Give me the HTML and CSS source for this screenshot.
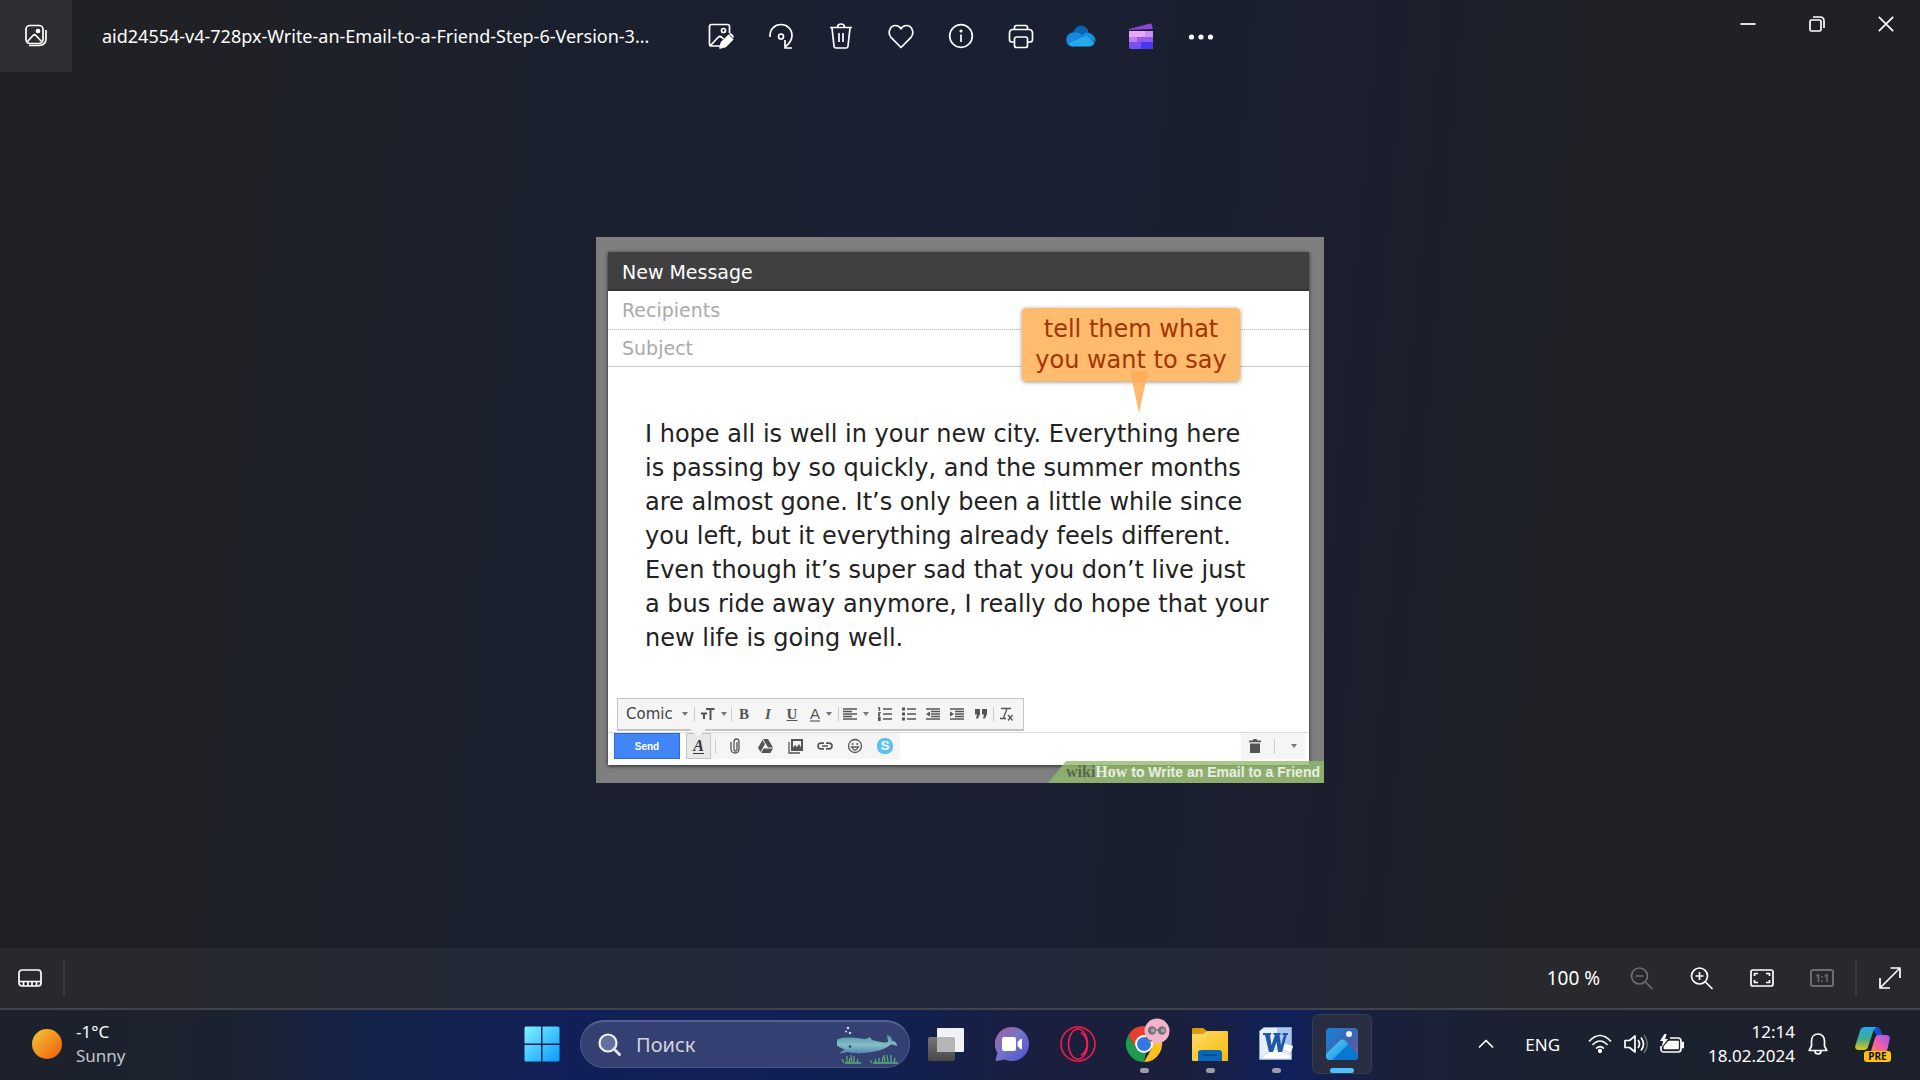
FILE: index.html
```html
<!DOCTYPE html>
<html lang="en">
<head>
<meta charset="utf-8">
<meta name="viewport" content="width=device-width, initial-scale=1">
<title>Photos</title>
<link rel="stylesheet" href="styles.css">
</head>
<body>
<header class="titlebar">
  <div class="title-left">
    <button class="gallery-btn" aria-label="Gallery"><svg class="icon" width="24" height="24" viewBox="0 0 24 24"><rect x="2" y="1.500" width="17" height="18" rx="4"/><path d="M5 21.500h10q7 0 7-7V6M3.500 17.500l5.500-6q1.500-1.500 3 0l5.500 6"/><circle class="fill" cx="14" cy="7" r="1.500"/></svg></button>
    <h1 class="filename">aid24554-v4-728px-Write-an-Email-to-a-Friend-Step-6-Version-3...</h1>
  </div>
  <nav class="tools" aria-label="Image tools">
    <button aria-label="Edit image"><svg class="icon" width="26" height="26" viewBox="0 0 26 26"><path d="M12 23H3.500q-2 0-2-2V3.500q0-2 2-2h16q2 0 2 2V10M3 22l7-7.500q2-2 4 0l1.500 1.500"/><circle cx="15.500" cy="7.500" r="2"/><path class="fill" d="M12 25l1.500-5.500 7-7 4 4-7 7zM21.500 11.500q1-1 2.500.5 1.500 1.500.5 2.500"/></svg></button>
    <button aria-label="Rotate"><svg class="icon" width="26" height="26" viewBox="0 0 26 26"><path d="M2 14V12.500C2 6 7 1.500 13 1.500S24 6 24 12.500c0 5-3 8.500-7 11.500M17 17v8h7"/><circle cx="13" cy="13.500" r="2.500"/></svg></button>
    <button aria-label="Delete"><svg class="icon" width="26" height="26" viewBox="0 0 26 26"><path d="M2 4.500h22M9.500 4c0-4 7-4 7 0M4 5l2 18q.2 2 2 2h10q1.800 0 2-2l2-18M11 10v9M15 10v9"/></svg></button>
    <button aria-label="Favorite"><svg class="icon" width="26" height="26" viewBox="0 0 26 26"><path d="M13 24.500L3 14.300C-.5 10.500 1.500 2.500 7.500 2.500c3 0 4.500 1.500 5.500 3.300 1-1.800 2.500-3.300 5.500-3.300 6 0 8 8 4.500 11.800z"/></svg></button>
    <button aria-label="Information"><svg class="icon" width="26" height="26" viewBox="0 0 26 26"><circle cx="13" cy="13" r="11.300"/><path d="M13 11.500v7.500"/><circle class="fill" cx="13" cy="8" r=".7"/></svg></button>
    <button aria-label="Print"><svg class="icon" width="26" height="26" viewBox="0 0 26 26"><path d="M6.500 19H4q-2.500 0-2.500-2.500v-6Q1.500 6.500 5 6.500h16q3.500 0 3.500 4v6Q24.500 19 22 19h-2.500M6.500 6V4.500q0-2 2-2h9q2 0 2 2V6"/><rect x="6.500" y="14" width="13" height="10.500" rx="2"/></svg></button>
    <button aria-label="OneDrive"><svg width="30" height="24" viewBox="0 0 30 24"><path fill="#0a64b5" d="M7 10C9-1 21 0 22.500 8L15 14z"/><path fill="#1688dc" d="M7 8.500C15 7 17 13 20 14L7 22.500C-2 22-2 9.500 7 8.500z"/><path fill="#1490df" d="M16 11.500q3-4 8-2.500 6 3 5.500 9z"/><path fill="#28a8ea" d="M2 19.500L20 11.500l8.500 7q-1.500 4-5.500 4H7q-3.500-.2-5-3z"/></svg></button>
    <button aria-label="Clipchamp"><svg width="24" height="26" viewBox="0 0 24 26"><path fill="#8b45d8" d="M0 6L21 .5q1.500-.2 2 1.500l.8 4L0 7z"/><path fill="#c990f4" d="M0 8h24v6H0z"/><path fill="#e8a8f8" d="M0 8h16v6H0z"/><path fill="#c47cf2" d="M0 14h24v5H0z"/><path fill="#9258f4" d="M8 14h16v5H8z"/><path fill="#7651f2" d="M0 19h24v7H2q-2 0-2-2z"/><path fill="#4b35ef" d="M12 19h12v5q0 2-2 2H12z"/></svg></button>
    <button aria-label="More"><svg class="dots" width="26" height="26" viewBox="0 0 26 26"><circle cx="3.500" cy="14" r="2.600"/><circle cx="13" cy="14" r="2.600"/><circle cx="22.500" cy="14" r="2.600"/></svg></button>
  </nav>
  <div class="window-controls">
    <button aria-label="Minimize"><svg class="icon" width="16" height="16" viewBox="0 0 16 16"><path d="M.5 8h15"/></svg></button>
    <button aria-label="Restore"><svg class="icon" width="16" height="16" viewBox="0 0 16 16"><rect x="1" y="4" width="11" height="11" rx="1.500"/><path d="M4 1h7q4 0 4 4v7"/></svg></button>
    <button aria-label="Close"><svg class="icon" width="16" height="16" viewBox="0 0 16 16"><path d="M.8.8l14.400 14.400M15.200.8L.8 15.200"/></svg></button>
  </div>
</header>

<main class="stage">
  <figure class="photo">
    <form class="compose">
      <h2 class="compose-title">New Message</h2>
      <input class="field" type="text" aria-label="Recipients" placeholder="Recipients">
      <input class="field field-subject" type="text" aria-label="Subject" placeholder="Subject">
      <textarea class="message" rows="7" aria-label="Message" spellcheck="false">I hope all is well in your new city. Everything here
is passing by so quickly, and the summer months
are almost gone. It’s only been a little while since
you left, but it everything already feels different.
Even though it’s super sad that you don’t live just
a bus ride away anymore, I really do hope that your
new life is going well.</textarea>
      <div class="format-bar">
        <span class="font-pick"><select class="font-select" aria-label="Font"><option>Comic</option></select><i class="caret"></i></span>
        <i class="sep"></i>
        <button type="button" class="wide size" aria-label="Size"><svg class="glyph" width="14" height="14" viewBox="0 0 14 14"><path d="M5 2h8.500M9.500 2v11M0 6.500h6M3 6.500V12" stroke-width="2"/></svg><i class="caret"></i></button>
        <i class="sep"></i>
        <button type="button" class="bold">B</button>
        <button type="button" class="italic">I</button>
        <button type="button" class="underline">U</button>
        <button type="button" class="wide" aria-label="Text color"><span class="color-letter">A</span><i class="caret"></i></button>
        <i class="sep"></i>
        <button type="button" class="wide" aria-label="Align"><svg class="glyph" width="14" height="12" viewBox="0 0 14 12"><path d="M0 1h14M0 3.500h9M0 6h14M0 8.500h9M0 11h14"/></svg><i class="caret"></i></button>
        <button type="button" aria-label="Numbered list"><svg class="glyph" width="14" height="14" viewBox="0 0 14 14"><path d="M5 2h9M5 7h9M5 12h9M0 1h1.500v3M0 6h2L0 8.500h2M0 10.500h2v3H0M0 12h2"/></svg></button>
        <button type="button" aria-label="Bulleted list"><svg class="glyph" width="14" height="14" viewBox="0 0 14 14"><path d="M5 2h9M5 7h9M5 12h9"/><path d="M0 2h3M0 7h3M0 12h3" stroke-width="3"/></svg></button>
        <button type="button" aria-label="Indent less"><svg class="glyph" width="14" height="12" viewBox="0 0 14 12"><path d="M0 1h14M5 3.500h9M5 6h9M5 8.500h9M0 11h14"/><path class="solid" d="M0 6l4-2.500v5z"/></svg></button>
        <button type="button" aria-label="Indent more"><svg class="glyph" width="14" height="12" viewBox="0 0 14 12"><path d="M0 1h14M5 3.500h9M5 6h9M5 8.500h9M0 11h14"/><path class="solid" d="M4 6L0 3.500v5z"/></svg></button>
        <button type="button" aria-label="Quote"><svg class="glyph" width="14" height="10" viewBox="0 0 14 10"><path class="solid" d="M1 0h5v5L4 9.500H2L3 5.500H1zM8 0h5v5l-2 4.500H9l1-4H8z"/></svg></button>
        <i class="sep"></i>
        <button type="button" aria-label="Remove formatting"><svg class="glyph" width="14" height="14" viewBox="0 0 14 14"><path d="M2 1.500h10M8 1.500L4.500 11M1 11.500h6M9 8l4.500 5.500M13.500 8L9 13.500"/></svg></button>
      </div>
      <div class="actions">
        <button type="button" class="send">Send</button>
        <button type="button" class="format-toggle" aria-label="Formatting options"><span>A</span></button>
        <div class="attach">
          <i class="sep"></i>
          <button type="button" aria-label="Attach file"><svg class="glyph" width="10" height="16" viewBox="0 0 10 16"><path d="M7 4v7.500q-.3 1.500-1.500 1.500T4 11.500V3.500Q4.200 1 6.500 1T9 3.500v8Q8.500 15 5.300 15 1.500 15 1 11.500V4"/></svg></button>
          <button type="button" aria-label="Insert from Drive"><svg class="glyph" width="15" height="14" viewBox="0 0 15 14"><path class="solid" d="M5 0h5l5 8.500h-5zM4.500 1l2.500 4-4.500 8L0 8.800zM5.500 9.500H15L12.500 14H3.200z"/></svg></button>
          <button type="button" aria-label="Insert photo"><svg class="glyph" width="15" height="15" viewBox="0 0 15 15"><path d="M1 3v11h11"/><path d="M4 1h10v10H4z" stroke-width="2"/><path class="solid" d="M4 10l3-4 2 2 2-3 3 5z"/></svg></button>
          <button type="button" aria-label="Insert link"><svg class="glyph" width="16" height="8" viewBox="0 0 16 8"><path d="M7 1.200H4Q1 1.200 1 4t3 2.800h3M9 1.200h3q3 0 3 2.800t-3 2.800H9M5 4h6" stroke-width="1.700"/></svg></button>
          <button type="button" aria-label="Insert emoji"><svg class="glyph" width="16" height="16" viewBox="0 0 16 16"><circle cx="8" cy="8" r="6.500"/><path d="M4.500 9q3.500 6 7 0z"/><circle class="solid" cx="5.700" cy="6" r="1"/><circle class="solid" cx="10.300" cy="6" r="1"/></svg></button>
          <button type="button" class="skype" aria-label="Skype"><span>S</span></button>
        </div>
        <div class="discard">
          <button type="button" aria-label="Discard"><svg class="glyph" width="12" height="14" viewBox="0 0 12 14"><path class="solid" d="M0 1.500h3.500l1-1.500h3l1 1.500H12v1.800H0zM1 4.500h10V14H1z"/></svg></button>
          <i class="sep"></i>
          <button type="button" aria-label="More options"><i class="caret"></i></button>
        </div>
      </div>
    </form>
    <p class="callout">tell them what<br>you want to say<svg class="pointer" width="18" height="42" viewBox="0 0 18 42"><path fill="#ffad55" fill-opacity=".85" d="M0 0h18L9 42z"/></svg></p>
    <figcaption class="watermark"><b class="wiki">wiki</b><b class="how">How</b> to Write an Email to a Friend</figcaption>
  </figure>
</main>

<section class="statusbar" aria-label="View controls">
  <button aria-label="Filmstrip"><svg class="icon" width="24" height="18" viewBox="0 0 24 18"><rect x="1" y="1" width="22" height="16" rx="3"/><path d="M1 12.500h22M5.500 13v4M10 13v4M14 13v4M18.500 13v4"/></svg></button>
  <i class="bar-sep"></i>
  <output class="zoom-level">100 %</output>
  <button class="dim" aria-label="Zoom out" disabled><svg class="icon" width="24" height="24" viewBox="0 0 24 24"><circle cx="9.500" cy="10" r="8"/><path d="M5.500 10h8M15.500 16l7 7"/></svg></button>
  <button aria-label="Zoom in"><svg class="icon" width="24" height="24" viewBox="0 0 24 24"><circle cx="9.500" cy="10" r="8"/><path d="M5.500 10h8M9.500 6v8M15.500 16l7 7"/></svg></button>
  <button aria-label="Fit to window"><svg class="icon" width="24" height="18" viewBox="0 0 24 18"><rect x="1" y="1" width="22" height="16" rx="2"/><path d="M4.500 7V4.500H8M16 4.500h3.500V7M19.500 11v2.500H16M8 13.500H4.500V11"/></svg></button>
  <button class="dim" aria-label="Actual size" disabled><span class="ratio">1:1</span></button>
  <i class="bar-sep"></i>
  <button class="expand" aria-label="Full screen"><svg class="icon" width="24" height="24" viewBox="0 0 24 24"><path d="M2 22L22 2M12.500 2H22v10M2 12v10h10"/></svg></button>
</section>

<footer class="taskbar">
  <div class="weather">
    <svg width="30" height="30" viewBox="0 0 30 30"><defs><linearGradient id="sun" x1="0" y1="0" x2="1" y2="1"><stop offset=".1" stop-color="#f3bd35"/><stop offset=".85" stop-color="#f06b0e"/></linearGradient></defs><circle cx="15" cy="15" r="15" fill="url(#sun)"/></svg>
    <div>-1°C<br><span class="muted">Sunny</span></div>
  </div>
  <nav class="apps" aria-label="Apps">
    <button aria-label="Start"><svg width="36" height="36" viewBox="0 0 36 36"><defs><linearGradient id="win" x1="0" y1="0" x2="1" y2="1"><stop offset="0" stop-color="#7df4fe"/><stop offset="1" stop-color="#079aff"/></linearGradient></defs><path fill="url(#win)" d="M2 .5h15v17H.5V2Q.5.500 2 .5zM18.500.5H34q1.500 0 1.500 1.500v15.500h-17zM.5 19H17v16.500H2q-1.500 0-1.500-1.500zM18.500 19h17v15q0 1.500-1.500 1.500H18.500z"/></svg></button>
    <label class="search"><svg width="24" height="24" viewBox="0 0 24 24"><circle cx="10" cy="10" r="8.500" fill="#62709f" stroke="#f3f3f5" stroke-width="2.200"/><path d="M16 16l5.500 5.500" stroke="#e0e0e6" stroke-width="3" stroke-linecap="round"/></svg>
      <input type="text" placeholder="Поиск" aria-label="Поиск">
      <svg width="62" height="40" viewBox="0 0 62 40"><defs><linearGradient id="whale" x1="0" y1="0" x2="0" y2="1"><stop offset="0" stop-color="#5497a6"/><stop offset=".55" stop-color="#83bfc6"/><stop offset="1" stop-color="#5687b5"/></linearGradient></defs><g fill="#c6e2f5"><circle cx="12" cy="3" r="1.300"/><circle cx="10" cy="6.500" r="1"/><circle cx="14" cy="8" r="1.200"/></g><path fill="url(#whale)" d="M1 15c2-2 10-3 19-2 5 .4 8 1 10 1l4-2 2 3c8 2 12 3 16 2 0-3-1-5-1-7 4 1 5 4 5 6 3 0 5 2 5 5-3-1-5-2-7-1-6 5-14 7-26 8-10 0-14 0-16-1-3 0-6 2-8 1 1-2 3-2 5-3-3-2-7-3-8-5z"/><path fill="#5689b6" d="M18 27l6 2-3-4z"/><circle cx="14" cy="21.500" r="1.200" fill="#203e55"/><path fill="none" stroke="#58aa78" stroke-width="1.300" d="M8 38l-2-4m5 4V31m2 7l1-5m2 5l-1-8m3 8V31m3 7l1-4m14 4l-2-3m6 3l-1-4m4 4V33m3 5l1-6m2 6l-1-8m4 8l-1-8m4 8V30m3 8l1-5m3 5l1-4m-54 4h16m12 0h26"/></svg>
    </label>
    <button aria-label="Task view"><svg width="36" height="34" viewBox="0 0 36 34"><defs><linearGradient id="tv" x1="0" y1="0" x2="0" y2="1"><stop offset="0" stop-color="#767676"/><stop offset="1" stop-color="#484848"/></linearGradient></defs><rect y="10" width="27" height="24" rx="2" fill="url(#tv)"/><rect x="9" y="1" width="27" height="24" rx="1" fill="#f2f2f2"/><path fill="#b5b5b5" d="M9 10h16q2 0 2 2v13H10q-1 0-1-1z"/></svg></button>
    <button aria-label="Chat"><svg width="34" height="34" viewBox="0 0 34 34"><defs><linearGradient id="chat" x1="0" y1="0" x2="1" y2="1"><stop offset="0" stop-color="#b15a9c"/><stop offset=".45" stop-color="#7476c7"/><stop offset="1" stop-color="#4e50cc"/></linearGradient></defs><path fill="url(#chat)" d="M17 0a17 17 0 110 34q-4 0-7-1.500L2 34q-2 0-1-3l1.500-5A17 17 0 0117 0z"/><rect x="7" y="10" width="14" height="14" rx="2" fill="#fff"/><path fill="#fff" d="M22.500 15l3-3q1.500-.8 1.500.8v8.400q0 1.600-1.500.8l-3-3z"/></svg></button>
    <button aria-label="Opera GX"><svg width="36" height="36" viewBox="0 0 36 36"><g fill="none" stroke="#f51c4e" stroke-width="1.600"><circle cx="18" cy="18" r="17"/><ellipse cx="18" cy="18" rx="9.500" ry="15"/><path d="M21 6.500c8 5 8 18 0 23"/></g></svg></button>
    <button class="running" aria-label="Chrome"><svg width="52" height="52" viewBox="-8 0 52 52"><g transform="translate(0 8)"><path fill="#e83f32" d="M2.400 9A18 18 0 0133.600 9H18L9 21z"/><path fill="#1f9b4d" d="M2.400 9l8 14 9.600 4-2 9A18 18 0 012.400 9z"/><path fill="#fcc31d" d="M33.600 9A18 18 0 0118 36l8-14-4-13z"/><circle cx="18" cy="18" r="9" fill="#fff"/><circle cx="18" cy="18" r="7" fill="#3478e8"/></g><circle cx="31" cy="13" r="12.500" fill="#f3b4cc"/><path d="M22 12h18M20 19q2 4 6 4" stroke="#695060" fill="none"/><circle cx="26" cy="12.500" r="4.200" fill="#777477"/><circle cx="36" cy="12.500" r="4.200" fill="#777477"/><circle cx="27" cy="12.500" r="2" fill="#aaa7a4"/><circle cx="37" cy="12.500" r="2" fill="#aaa7a4"/></svg></button>
    <button class="running" aria-label="File Explorer"><svg width="36" height="34" viewBox="0 0 36 34"><defs><linearGradient id="fold" x1="0" y1="0" x2="1" y2="1"><stop offset="0" stop-color="#ffdc66"/><stop offset="1" stop-color="#f9b80e"/></linearGradient></defs><path fill="#dc9b08" d="M0 10V2Q0 1 1.500 1H11l4 3-3 5z"/><path fill="url(#fold)" d="M0 7h11l4-3h20q1 0 1 1v29H1q-1 0-1-1z"/><path fill="#0868b8" d="M6 34v-8q0-3 3-3h18q3 0 3 3v8z"/><path d="M11 28h14" stroke="#07448c" stroke-width="1.500"/></svg></button>
    <button class="running" aria-label="Word"><svg width="34" height="34" viewBox="0 0 34 34"><path fill="#e7f0fa" stroke="#7fa5d1" d="M5 .5h27.500v32H.5V4z"/><path fill="#aec7e7" d="M18 1h14v20L18 14z"/><path fill="#fff" stroke="#adc3dd" stroke-width=".7" d="M1 32q8-9 19-10l12 4v6zM25 16l9 3-3 9-8-3z"/><path fill="#1f57ac" d="M4 6h8v2h-1l1.500 10L16 8h-1.500V6h7v2h-1l1.500 10L25 8h-1.500V6H29v2h-1.300L23 25h-4l-1.500-10L14 25h-4L6 8H4z"/></svg></button>
    <button class="active" aria-label="Photos"><svg width="32" height="32" viewBox="0 0 32 32"><defs><linearGradient id="ph" x1="0" y1="0" x2="1" y2="1"><stop offset="0" stop-color="#1484d8"/><stop offset=".6" stop-color="#4561ad"/><stop offset="1" stop-color="#7660a5"/></linearGradient><linearGradient id="hill" x1="0" y1="0" x2="1" y2="1"><stop offset="0" stop-color="#55d9fb"/><stop offset="1" stop-color="#1584da"/></linearGradient><clipPath id="tile"><rect width="32" height="32" rx="4"/></clipPath></defs><g clip-path="url(#tile)"><rect width="32" height="32" fill="url(#ph)"/><path fill="#0b80d6" d="M4 33L17 12l15 15v6z"/><path fill="url(#hill)" d="M-1 27L14 12.500q2.500-2 5 0l3.500 3.500L6 33h-7z"/><path fill="#0877cf" d="M5 33l15-14q2.500-2 5 0l8 8v6z"/><circle cx="23" cy="6" r="3" fill="#f1f3f9"/></g></svg></button>
  </nav>
  <div class="tray">
    <button aria-label="Show hidden icons"><svg class="icon" width="16" height="10" viewBox="0 0 16 10"><path d="M1 8.500l7-7 7 7"/></svg></button>
    <span class="lang">ENG</span>
    <div class="status-icons">
      <svg class="icon" width="24" height="20" viewBox="0 0 24 20"><path d="M1 7.500q11-12 22 0M4.500 11q7.500-8 15 0M8 14.500q4-4 8 0"/><circle class="fill" cx="12" cy="17" r="1.300"/></svg>
      <svg class="icon" width="24" height="20" viewBox="0 0 24 20"><path d="M1 6.500h4.500L11 2v16l-5.500-4.500H1zM14 6q3 4 0 8M17 3.500q5 6.500 0 13"/><path d="M20 1q6.500 9 0 18" opacity=".3"/></svg>
      <svg class="icon" width="24" height="20" viewBox="0 0 24 20"><path d="M10 4h8q3 0 3 3v8q0 3-3 3H4q-3 0-3-3v-3"/><path class="fill" d="M9 7.500h9v7H4.500v-2zM22 8.500h1.500v5H22z"/><path class="fill" stroke="none" d="M5-1L0 7h3L2 13l6-8H5l2-6z"/></svg>
    </div>
    <time class="clock">12:14<br>18.02.2024</time>
    <button class="bell" aria-label="Notifications"><svg class="icon" width="20" height="24" viewBox="0 0 20 24"><path d="M10 2C6 2 3.500 5 3.500 9v5L1.200 18.500h17.600L16.500 14V9c0-4-2.500-7-6.500-7zM7 19q0 3 3 3t3-3"/></svg></button>
    <button class="copilot" aria-label="Copilot"><svg width="36" height="36" viewBox="0 0 36 36"><defs><linearGradient id="ca" x1="0" y1="0" x2="0" y2="1"><stop offset="0" stop-color="#23a8ee"/><stop offset=".55" stop-color="#48ad82"/><stop offset="1" stop-color="#e4c51c"/></linearGradient><linearGradient id="cb" x1="1" y1="0" x2="0" y2="1"><stop offset="0" stop-color="#9c55ee"/><stop offset=".6" stop-color="#ef60a8"/><stop offset="1" stop-color="#fa8067"/></linearGradient></defs><path fill="#1450c8" d="M17 1h4q4 0 5 4l2 5h-6z"/><path fill="url(#ca)" d="M10 1h12q-3 1-4 5l-5 15q-1 3-4 3H4q-5 0-3.500-5L5 5q1-4 5-4z"/><path fill="url(#cb)" d="M23 9h8q5 0 3.500 5L32 25H16l4-13q1-3 3-3z"/></svg><span class="pre">PRE</span></button>
  </div>
</footer>
</body>
</html>
```
FILE: styles.css
```css
* {
  box-sizing: border-box;
}

body {
  margin: 0;
  min-height: 100vh;
  display: flex;
  flex-direction: column;
  background: linear-gradient(95deg, #202124 0%, #1f2126 12%, #1b202e 28%, #1a2033 50%, #1b1f2e 68%, #202125 82%, #202124 100%);
  color: #fff;
  font-family: "Noto Sans", sans-serif;
  font-size: 17px;
}

button,
input,
select,
textarea {
  margin: 0;
  padding: 0;
  border: 0;
  background: none;
  color: inherit;
  font: inherit;
}

button {
  display: flex;
  align-items: center;
  justify-content: center;
  flex: none;
}

svg {
  display: block;
  flex: none;
}

.icon {
  fill: none;
  stroke: currentColor;
  stroke-width: 1.7;
  stroke-linejoin: round;
}

.icon .fill,
.dots {
  fill: currentColor;
}

.titlebar {
  display: grid;
  grid-template-columns: 1fr auto 1fr;
  height: 72px;
}

.title-left {
  display: flex;
  align-items: center;
  gap: 30px;
  min-width: 0;
}

.gallery-btn {
  width: 72px;
  height: 72px;
  background: #2d2e31;
}

.filename {
  margin: 0;
  font-size: 18px;
  font-weight: 400;
  white-space: nowrap;
}

.tools {
  display: flex;
  padding-left: 2px;
}

.tools button {
  width: 60px;
}

.window-controls {
  display: flex;
  justify-content: flex-end;
}

.window-controls button {
  width: 69px;
  height: 48px;
}

.stage {
  flex: 1;
  display: flex;
  align-items: center;
  justify-content: center;
}

.photo {
  position: relative;
  width: 728px;
  margin: 0;
  padding: 15px 15px 18px 12px;
  background: #7f7f7f;
}

.compose {
  background: #fff;
  color: #222;
  box-shadow: 0 1px 4px rgba(0, 0, 0, .7);
  font-family: "DejaVu Sans", sans-serif;
}

.compose-title {
  margin: 0;
  padding: 4px 0 0 14px;
  background: #404040;
  border-bottom: 2px solid #333;
  color: #fff;
  font-size: 19px;
  font-weight: 400;
  line-height: 33px;
}

.field {
  display: block;
  width: 100%;
  height: 39px;
  padding-left: 14px;
  border-bottom: 1px dotted #bbb;
  font-size: 19px;
}

.field::placeholder {
  color: #aaa;
  opacity: 1;
}

.field-subject {
  height: 37px;
  border-bottom: 1px solid #ccc;
}

.message {
  display: block;
  width: 100%;
  padding: 50px 0 0 37px;
  overflow: hidden;
  resize: none;
  font-size: 24px;
  line-height: 34px;
  white-space: pre;
}

.format-bar {
  position: relative;
  display: flex;
  align-items: center;
  width: 407px;
  height: 33px;
  margin: 43px 0 1px 9px;
  padding-left: 8px;
  border: 1px solid #c4c4c4;
  border-bottom-width: 2px;
  background: #f5f5f5;
  color: #555;
}

.format-bar::after {
  content: "";
  position: absolute;
  top: 100%;
  left: 72px;
  border: 8px solid transparent;
  border-top-color: #f5f5f5;
  border-bottom: 0;
}

.format-bar button {
  width: 24px;
  height: 30px;
  font-family: "Liberation Serif", serif;
  font-size: 15px;
  font-weight: 700;
}

.format-bar .wide {
  width: 34px;
  gap: 6px;
}

.format-bar .size {
  margin-left: 2px;
}

.font-pick {
  display: flex;
  align-items: center;
  width: 68px;
}

.font-select {
  width: 56px;
  appearance: none;
  font-size: 15px;
  color: #444;
}

.format-bar .italic {
  font-style: italic;
}

.underline {
  text-decoration: underline;
}

.color-letter {
  border-bottom: 2px solid #999;
  font-family: "Liberation Sans", sans-serif;
  font-weight: 400;
  line-height: 13px;
}

.caret {
  border: 3px solid transparent;
  border-top: 4px solid #777;
  border-bottom: 0;
}

.sep {
  width: 1px;
  height: 15px;
  background: #ccc;
}

.glyph {
  fill: none;
  stroke: #555;
  stroke-width: 1.3;
}

.glyph .solid {
  fill: #555;
  stroke: none;
}

.actions {
  display: flex;
  align-items: center;
  height: 33px;
  padding: 0 4px 6px 6px;
  border-top: 1px solid #ddd;
}

.send {
  width: 66px;
  height: 26px;
  border: 1px solid #2f66dd;
  background: #4285f4;
  color: #fff;
  font-family: "Liberation Sans", sans-serif;
  font-size: 10px;
  font-weight: 700;
}

.format-toggle {
  width: 25px;
  height: 26px;
  margin-left: 6px;
  border: 1px solid #c4c4c4;
  background: #e8e8e8;
  color: #333;
  font-family: "Liberation Serif", serif;
  font-size: 16px;
  font-style: italic;
  font-weight: 700;
}

.format-toggle span {
  border-bottom: 1px solid #333;
  line-height: 15px;
}

.attach {
  display: flex;
  align-items: center;
  height: 26px;
  padding-left: 4px;
  background: #f5f5f5;
}

.attach button {
  width: 30px;
}

.attach .sep {
  margin-right: 4px;
}

.skype span {
  width: 16px;
  border-radius: 7px;
  background: #5cc3ec;
  color: #fff;
  font-family: "Liberation Sans", sans-serif;
  font-size: 13px;
  font-weight: 700;
  line-height: 16px;
}

.discard {
  display: flex;
  align-items: center;
  gap: 9px;
  height: 26px;
  margin-left: auto;
  padding: 0 1px 0 4px;
  background: #f5f5f5;
}

.discard button {
  width: 20px;
}

.callout {
  position: absolute;
  top: 71px;
  left: 426px;
  width: 218px;
  margin: 0;
  padding: 6px 0 5px;
  border-radius: 4px;
  background: rgba(255, 184, 104, .96);
  box-shadow: 0 1px 4px rgba(120, 90, 50, .7);
  color: #a23500;
  font-family: "DejaVu Sans", sans-serif;
  font-size: 24px;
  line-height: 31px;
  text-align: center;
}

.pointer {
  position: absolute;
  top: 63px;
  left: 108px;
}

.watermark {
  position: absolute;
  right: 0;
  bottom: 0;
  padding: 0 4px 0 18px;
  background: rgba(146, 186, 108, .8);
  clip-path: polygon(18px 0, 100% 0, 100% 100%, 0 100%);
  color: #e8efe2;
  font-family: "Liberation Sans", sans-serif;
  font-size: 14px;
  font-weight: 700;
  line-height: 22px;
}

.wiki,
.how {
  font-family: "Liberation Serif", serif;
  font-size: 16px;
}

.wiki {
  color: #566650;
}

.statusbar {
  display: flex;
  align-items: center;
  height: 62px;
  padding-right: 18px;
  border-bottom: 2px solid #40434c;
  background: rgba(255, 255, 255, .04);
}

.statusbar button {
  width: 60px;
  height: 60px;
}

.bar-sep {
  width: 2px;
  height: 36px;
  margin-left: 3px;
  background: #3a3b3f;
}

.zoom-level {
  margin-left: auto;
  margin-right: 12px;
  font-size: 19px;
}

.statusbar .dim {
  color: #6d6e71;
}

.ratio {
  width: 24px;
  border: 2px solid;
  border-radius: 3px;
  font-size: 10px;
  font-weight: 700;
  line-height: 14px;
}

.statusbar .expand {
  width: 24px;
  margin-left: 21px;
}

.taskbar {
  display: grid;
  grid-template-columns: minmax(0, 512fr) auto minmax(0, 548fr);
  align-items: center;
  height: 70px;
  padding-bottom: 2px;
  background: linear-gradient(90deg, #1c212b 0%, #1b222f 12%, #15234a 19%, #111f58 30%, #112052 46%, #191f3e 54%, #1b1f3a 61%, #10205a 67%, #1a2038 73%, #1b2130 80%, #1c202a 100%);
}

.weather {
  display: flex;
  align-items: center;
  gap: 14px;
  padding-left: 32px;
  line-height: 24px;
}

.muted {
  color: #c3c6cc;
}

.apps {
  display: flex;
  align-items: center;
  gap: 6px;
}

.apps button {
  position: relative;
  width: 60px;
  height: 60px;
  border-radius: 6px;
}

.apps .running::after,
.apps .active::after {
  content: "";
  position: absolute;
  bottom: 1px;
  width: 9px;
  height: 5px;
  border-radius: 3px;
  background: #9b9dab;
}

.apps .active {
  border: 1px solid #363c51;
  background: #282d41;
}

.apps .active::after {
  bottom: 0;
  width: 24px;
  background: #4cc2ff;
}

.search {
  display: flex;
  align-items: center;
  width: 330px;
  height: 48px;
  margin-left: 2px;
  padding: 0 11px 0 17px;
  border: 1px solid #4b588a;
  border-top: 2px solid #545f8d;
  border-radius: 24px;
  background: #344071;
}

.search input {
  flex: 1;
  min-width: 0;
  margin-left: 14px;
  font-size: 20px;
}

.search input::placeholder {
  color: #d3d5df;
  opacity: 1;
}

.tray {
  display: flex;
  align-items: center;
  justify-content: flex-end;
  padding-right: 29px;
}

.lang {
  margin: 0 28px 0 31px;
}

.status-icons {
  display: flex;
  gap: 12px;
}

.clock {
  margin: 0 13px 0 24px;
  line-height: 24px;
  text-align: right;
}

.copilot {
  position: relative;
  margin-left: 27px;
}

.pre {
  position: absolute;
  right: 0;
  bottom: 0;
  width: 27px;
  border-radius: 3px;
  background: #ffc20e;
  color: #111;
  font-size: 10px;
  font-weight: 700;
  line-height: 11px;
}
```
